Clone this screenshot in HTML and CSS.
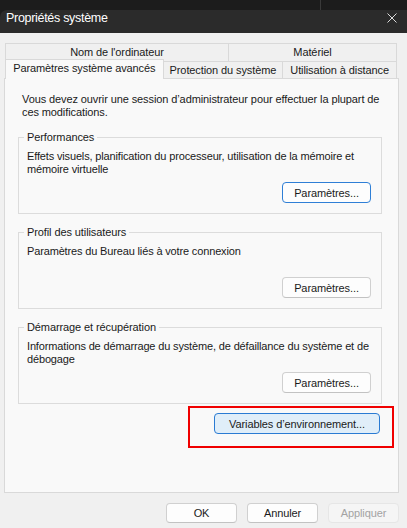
FILE: index.html
```html
<!DOCTYPE html>
<html lang="fr">
<head>
<meta charset="utf-8">
<title>Propriétés système</title>
<link rel="stylesheet" href="styles.css">
</head>
<body>
<div class="chrome">
  <div class="band"><span class="band-line"></span></div>
  <div class="titlebar">
    <span class="title">Propriétés système</span>
    <svg class="close" width="10" height="10" viewBox="0 0 10 10"><path d="M0.5 0.5L9.5 9.5M9.5 0.5L0.5 9.5" stroke="#dcdcdc" stroke-width="1" fill="none"/></svg>
  </div>
</div>
<div class="tabs">
  <div class="tabrow back">
    <div class="tab t-nom">Nom de l'ordinateur</div>
    <div class="tab t-mat">Matériel</div>
  </div>
  <div class="tabrow front">
    <div class="tab sel t-adv">Paramètres système avancés</div>
    <div class="tab t-prot">Protection du système</div>
    <div class="tab t-dist">Utilisation à distance</div>
  </div>
</div>
<div class="panel">
  <p class="intro">Vous devez ouvrir une session d’administrateur pour effectuer la plupart de ces modifications.</p>
  <div class="group">
    <div class="legend">Performances</div>
    <div class="desc">Effets visuels, planification du processeur, utilisation de la mémoire et mémoire virtuelle</div>
    <div class="btnrow"><button class="btn param focus">Paramètres...</button></div>
  </div>
  <div class="group">
    <div class="legend">Profil des utilisateurs</div>
    <div class="desc">Paramètres du Bureau liés à votre connexion</div>
    <div class="btnrow"><button class="btn param">Paramètres...</button></div>
  </div>
  <div class="group">
    <div class="legend">Démarrage et récupération</div>
    <div class="desc">Informations de démarrage du système, de défaillance du système et de débogage</div>
    <div class="btnrow"><button class="btn param">Paramètres...</button></div>
  </div>
  <div class="envrow">
    <div class="envwrap">
      <button class="btn env">Variables d’environnement...</button>
      <span class="highlight"></span>
    </div>
  </div>
</div>
<div class="footer">
  <button class="btn foot">OK</button>
  <button class="btn foot">Annuler</button>
  <button class="btn foot disabled">Appliquer</button>
</div>
</body>
</html>
```
FILE: styles.css
```css
* { box-sizing: border-box; }
html, body {
  margin: 0;
  padding: 0;
}
body {
  width: 407px;
  height: 528px;
  overflow: hidden;
  background: #f0f0f0;
  font-family: "Liberation Sans", Arial, sans-serif;
  font-size: 11px;
  letter-spacing: -0.1px;
  color: #1a1a1a;
}
.chrome {
  background: #1c1c1c;
}
.band {
  height: 10px;
  display: flex;
}
.band-line {
  width: 1px;
  margin-left: 320px;
  background: #3a3a3a;
}
.titlebar {
  height: 23px;
  background: #2b2b2b;
  border-top-left-radius: 7px;
  display: flex;
  justify-content: space-between;
  align-items: flex-start;
  padding-left: 6px;
}
.title {
  color: #ffffff;
  font-size: 12.5px;
  letter-spacing: -0.3px;
  line-height: 16px;
}
.close {
  margin-top: 3px;
  margin-right: 10px;
}
.tabs {
  margin: 10px 0 0 5px;
  width: 392px;
}
.tabrow {
  display: flex;
}
.tabrow.back {
  height: 18px;
}
.tabrow.front {
  height: 17px;
  align-items: flex-end;
}
.tab {
  border: 1px solid #d9d9d9;
  border-bottom: 0;
  text-align: center;
  white-space: nowrap;
  color: #1a1a1a;
}
.back .tab {
  height: 18px;
  line-height: 17px;
}
.front .tab {
  height: 17px;
  line-height: 16px;
}
.t-nom { width: 224px; }
.t-mat { width: 169px; margin-left: -1px; }
.t-adv { width: 159px; }
.t-prot { width: 121px; margin-left: -1px; }
.t-dist { width: 115px; margin-left: -1px; }
.front .tab.sel {
  height: 20px;
  line-height: 17px;
  margin-bottom: -1px;
  background: #f9f9f9;
  position: relative;
  z-index: 1;
}
.panel {
  margin-left: 4px;
  width: 395px;
  height: 415px;
  border: 1px solid #d9d9d9;
  background: #f9f9f9;
  padding: 14px 16px 0 13px;
}
.intro {
  margin: 0;
  padding-left: 4px;
  line-height: 13px;
}
.group {
  margin-top: 18px;
  border: 1px solid #dcdcdc;
  padding: 0 10px 10px 8px;
}
.legend {
  width: fit-content;
  margin: -7px 0 0 -3px;
  padding: 0 3px;
  background: #f9f9f9;
  line-height: 13px;
}
.desc {
  margin-top: 6px;
  margin-right: -8px;
  line-height: 13px;
  min-height: 26px;
  letter-spacing: -0.15px;
}
.btnrow {
  display: flex;
  justify-content: flex-end;
  margin-top: 6px;
}
.btn {
  font-family: inherit;
  font-size: 11px;
  letter-spacing: -0.1px;
  color: #1a1a1a;
  background: #fdfdfd;
  border: 1px solid #d0d0d0;
  border-bottom-color: #c2c2c2;
  border-radius: 4px;
  padding: 0;
  margin: 0;
}
.param {
  width: 89px;
  height: 21px;
}
.param.focus {
  border-color: #2f7fd6;
}
.envrow {
  display: flex;
  justify-content: flex-end;
  margin-top: 9px;
  padding-right: 2px;
}
.envwrap {
  position: relative;
}
.env {
  width: 166px;
  height: 21px;
  background: #e0eef9;
  border-color: #2a7bd3;
}
.highlight {
  position: absolute;
  left: -26px;
  top: -7px;
  right: -14px;
  bottom: -14px;
  border: 2px solid #f00000;
  pointer-events: none;
}
.footer {
  display: flex;
  justify-content: flex-end;
  gap: 10px;
  margin-top: 10px;
  padding-right: 8px;
}
.foot {
  width: 71px;
  height: 20px;
}
.foot.disabled {
  background: #f5f5f5;
  border-color: #e6e6e6;
  color: #a3a3a3;
}
```
